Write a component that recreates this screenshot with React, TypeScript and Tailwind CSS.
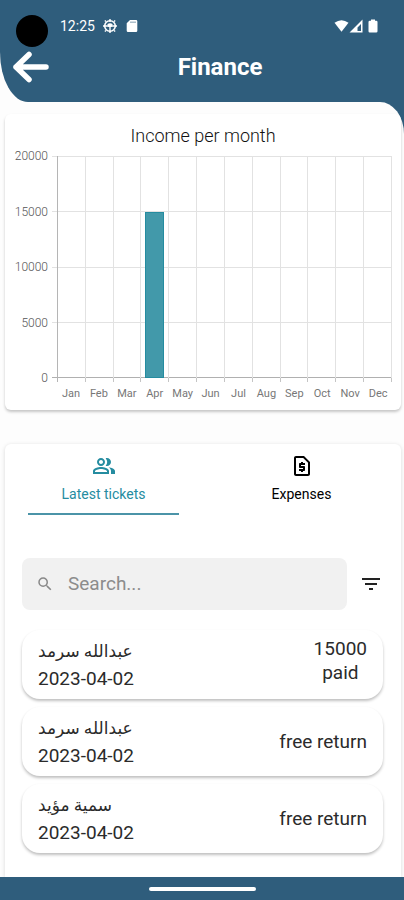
import { useState } from "react";
import { MdFilterList, MdOutlinePeopleAlt, MdOutlineRequestPage, MdSearch } from "react-icons/md";

const months = ["Jan", "Feb", "Mar", "Apr", "May", "Jun", "Jul", "Aug", "Sep", "Oct", "Nov", "Dec"]
const income = [0, 0, 0, 15000, 0, 0, 0, 0, 0, 0, 0, 0]
const levels = [20000, 15000, 10000, 5000, 0]
const maxIncome = 20000

const tickets = [
    { id: 1, name: "عبدالله سرمد", date: "2023-04-02", status: ["15000", "paid"] },
    { id: 2, name: "عبدالله سرمد", date: "2023-04-02", status: ["free return"] },
    { id: 3, name: "سمية مؤيد", date: "2023-04-02", status: ["free return"] },
]

function StatusBar() {
    return (
        <div className="relative flex h-[51px] items-center justify-between bg-[#2f5d7c] pr-6 pl-[60px] text-white">
            {/* camera */}
            <div className="absolute top-[15px] left-4 z-10 h-8 w-8 rounded-full bg-black"></div>
            <div className="flex items-center gap-2">
                <span className="text-sm">12:25</span>
                <svg className="-ml-1 h-3.5 w-[22px]" viewBox="-4 0 22 14" fill="none" stroke="currentColor">
                    <circle cx="7" cy="7" r="5.3" strokeWidth="1.6" />
                    <path d="M7 0v3M7 7v7M0 7h14M3 2.500L1.800 1.500M11 2.500L12.200 1.500M3 11.500L1.800 12.500M11 11.500L12.200 12.500" strokeWidth="1.4" />
                    <path d="M4.300 5.200Q7 3.200 9.700 5.200L8.500 8h-3z" fill="currentColor" stroke="none" />
                </svg>
                <svg className="-ml-1 h-3.5 w-3.5" viewBox="0 0 14 14" fill="currentColor">
                    <path d="M5 1H11a1.300 1.300 0 0 1 1.300 1.300v9.400A1.300 1.300 0 0 1 11 13H3a1.300 1.300 0 0 1-1.300-1.300V4.300z" />
                    <path d="M6 2.500v1.500M8 2.500v1.500M10 2.500v1.500" stroke="#2f5d7c" strokeWidth="0.800" />
                </svg>
            </div>
            <svg className="h-3.5 w-[46px]" viewBox="0 0 46 14" fill="currentColor">
                <path d="M0.500 3.800Q7.500-1.500 14.500 3.800L7.500 12.800z" />
                <path fillRule="evenodd" d="M28.500 0.500V13.500H15.500zM27 5v7h-3.500V8.500z" />
                <path d="M37 1.700V.500h4v1.200h1.200q1.300 0 1.300 1.300v9.200q0 1.300-1.300 1.300h-6.400q-1.300 0-1.300-1.300V3q0-1.300 1.300-1.300z" />
            </svg>
        </div>
    )
}

function Header() {
    return (
        <div className="bg-[#fdfdfd]">
            <header className="flex h-[51px] items-start justify-between rounded-bl-[28px_50px] bg-[#2f5d7c] pr-4 pl-3 text-white">
                <button type="button" aria-label="Back" className="h-8 w-10">
                    <svg className="h-8 w-10" viewBox="0 0 40 32" fill="none" stroke="currentColor" strokeWidth="5.500" strokeLinecap="round" strokeLinejoin="round">
                        <path d="M17 3.500L4 16L17 28.500M4 16H34" />
                    </svg>
                </button>
                <h1 className="flex-1 px-5 text-center text-2xl leading-8 font-bold">Finance</h1>
            </header>
        </div>
    )
}

function IncomeChart() {
    return (
        <section className="mr-[3px] ml-[5px] rounded-md bg-white pt-2 pb-2 shadow-[0_2px_3px_rgba(0,0,0,0.22)]">
            <h2 className="text-center text-lg leading-7 font-light text-[#111111]">Income per month</h2>
            <div className="mt-1.5 flex pr-[9px]">
                <div className="-my-2 flex w-[43px] flex-col justify-between text-right text-xs leading-4 font-light text-[#555555]">
                    {levels.map((level) => (
                        <span key={level}>{level}</span>
                    ))}
                </div>
                <div className="ml-1 grid h-[222px] flex-1">
                    {/* horizontal lines */}
                    <div className="col-start-1 row-start-1 flex flex-col border-t border-[#e2e2e2]">
                        <div className="flex-1 border-b border-[#e2e2e2]"></div>
                        <div className="flex-1 border-b border-[#e2e2e2]"></div>
                        <div className="flex-1 border-b border-[#e2e2e2]"></div>
                        <div className="flex-1 border-b border-[#b0b0b0]"></div>
                    </div>
                    {/* vertical lines and bars */}
                    <div className="col-start-1 row-start-1 ml-[5px] flex border-l border-[#b5b5b5]">
                        {income.map((value, i) => (
                            <div key={months[i]} className="flex flex-1 items-end justify-center border-r border-[#e2e2e2]">
                                {value > 0 && (
                                    <div className="w-[19px] border border-[#258ca0] bg-[#4299aa]" style={{ height: `${(value / maxIncome) * 100}%` }}></div>
                                )}
                            </div>
                        ))}
                    </div>
                </div>
            </div>
            <div className="mr-[9px] ml-[52px] flex border-l border-[#b5b5b5]">
                {months.map((month) => (
                    <div key={month} className="h-1 flex-1 border-r border-[#c5c5c5]"></div>
                ))}
            </div>
            <div className="mr-[9px] ml-[52px] flex pt-1 text-[11px] leading-4 text-[#777777]">
                {months.map((month) => (
                    <span key={month} className="w-0 flex-1 text-center">{month}</span>
                ))}
            </div>
        </section>
    )
}

function Tabs({ tab, setTab }: { tab: string; setTab: (tab: string) => void }) {
    return (
        <div className="flex justify-between pr-6 pl-[23px]">
            <button
                type="button"
                onClick={() => setTab("tickets")}
                className={`flex h-[71px] w-[151px] flex-col items-center border-b-2 pt-2.5 ${tab === "tickets" ? "border-[#4b94a8] text-[#258ca0]" : "border-transparent text-black"}`}
            >
                <MdOutlinePeopleAlt className="h-6 w-6" />
                <span className="mt-2 text-sm leading-4">Latest tickets</span>
            </button>
            <button
                type="button"
                onClick={() => setTab("expenses")}
                className={`flex h-[71px] w-[151px] flex-col items-center border-b-2 pt-2.5 ${tab === "expenses" ? "border-[#4b94a8] text-[#258ca0]" : "border-transparent text-black"}`}
            >
                <MdOutlineRequestPage className="h-6 w-6" />
                <span className="mt-2 text-sm leading-4">Expenses</span>
            </button>
        </div>
    )
}

function App() {
    const [tab, setTab] = useState("tickets")
    const [search, setSearch] = useState("")

    const shown = tickets.filter((t) => t.name.includes(search) || t.date.includes(search))

    return (
        <div className="bg-[#fdfdfd] font-[Roboto,'DejaVu_Sans',sans-serif]">
            <StatusBar />
            <Header />
            <div className="bg-[linear-gradient(#2f5d7c_40px,#fdfdfd_40px)]">
                <main className="rounded-tr-[24px_32px] bg-[#fdfdfd] pt-3">
                    <IncomeChart />
                    <section className="mt-[34px] mr-[3px] ml-[5px] rounded-t-md bg-white pb-6 shadow-[0_1px_4px_rgba(0,0,0,0.15)]">
                        <Tabs tab={tab} setTab={setTab} />
                        <div className="mt-[43px] flex items-center gap-3 pr-[18px] pl-[17px]">
                            <label className="flex h-[52px] min-w-0 flex-1 items-center rounded-lg bg-[#f1f1f1] px-3.5">
                                <MdSearch className="h-[18px] w-[18px] shrink-0 text-[#888888]" />
                                <input
                                    type="text"
                                    aria-label="Search"
                                    placeholder="Search..."
                                    value={search}
                                    onChange={(e) => setSearch(e.target.value)}
                                    className="ml-3.5 w-full min-w-0 text-[19px] outline-none placeholder:text-[#8c8c8c]"
                                />
                            </label>
                            <button type="button" aria-label="Filter" className="text-[#222222]">
                                <MdFilterList className="h-6 w-6" />
                            </button>
                        </div>
                        <ul className="mt-5 flex flex-col gap-2 pr-[18px] pl-[17px]">
                            {shown.map((ticket) => (
                                <li key={ticket.id} className="flex h-[69px] items-center justify-between rounded-[18px] bg-white px-4 text-[19px] text-[#2b2b2b] shadow-[0_2px_3px_rgba(0,0,0,0.25)]">
                                    <div className="flex flex-col items-start leading-7">
                                        <span dir="rtl" className="text-[17px] leading-7">{ticket.name}</span>
                                        <span>{ticket.date}</span>
                                    </div>
                                    <div className={`flex flex-col items-center leading-6 ${ticket.status.length > 1 ? "pb-2" : ""}`}>
                                        {ticket.status.map((line) => (
                                            <span key={line}>{line}</span>
                                        ))}
                                    </div>
                                </li>
                            ))}
                        </ul>
                    </section>
                </main>
            </div>
            <footer className="flex h-[23px] items-center justify-center bg-[#2f5d7c]">
                <div className="h-1 w-[107px] rounded-full bg-white"></div>
            </footer>
        </div>
    )
}

export default App
